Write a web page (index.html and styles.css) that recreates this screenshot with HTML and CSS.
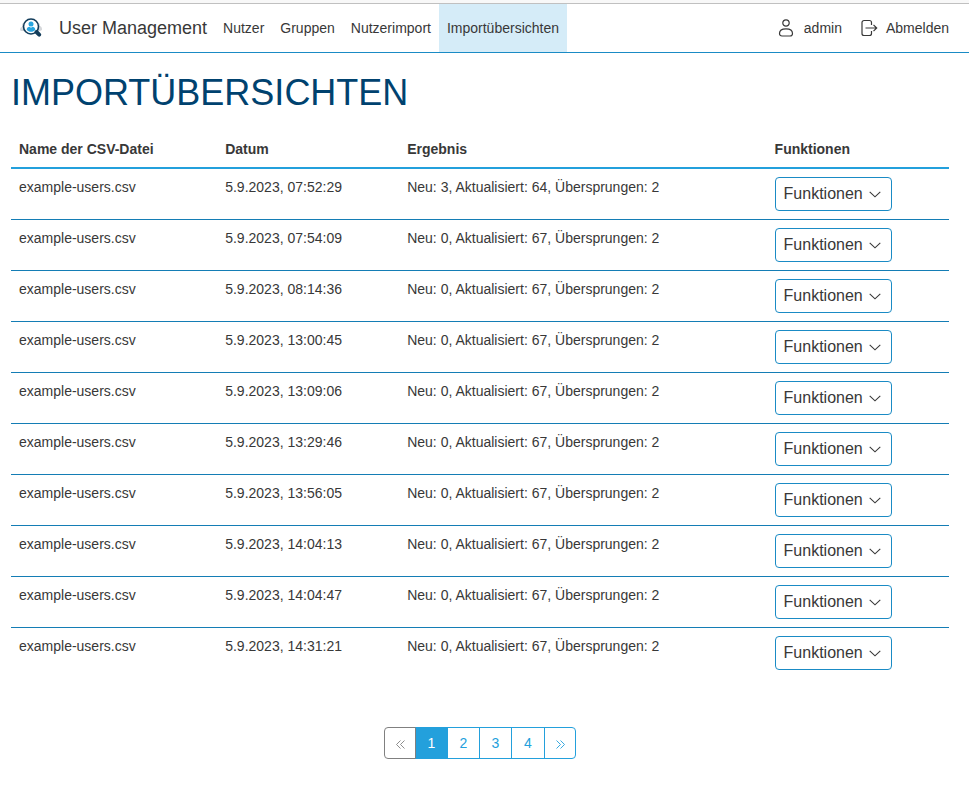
FILE: index.html
```
<!DOCTYPE html>
<html lang="de">
<head>
<meta charset="utf-8">
<title>User Management</title>
<link rel="stylesheet" href="styles.css">
</head>
<body>
<div class="topline"></div>
<nav class="navbar">
  <a class="brand">
    <svg class="logo" width="24" height="20" viewBox="0 0 24 20">
      <path d="M0 12c0-2 1-3 2-3V6l3-2h12l3 2v2c2 1 2 2 2 4l-2 1H1z" fill="#d5d7da"/>
      <circle cx="11" cy="8.500" r="7.500" fill="#fff" stroke="#123c5a" stroke-width="1.600"/>
      <circle cx="11" cy="6" r="2.500" fill="#29a5df"/>
      <path d="M6.700 11.800c0-2 1.500-2.800 2.800-3l1.500 1 1.500-1c1.300.2 2.800 1 2.800 3-1.300 1.500-2.500 2-4.300 2s-3-.5-4.300-2z" fill="#29a5df"/>
      <path d="M16.500 14l2.700 2.600" stroke="#123c5a" stroke-width="4" stroke-linecap="round"/>
    </svg>
    <span class="brand-name">User Management</span>
  </a>
  <a class="nav-link">Nutzer</a>
  <a class="nav-link">Gruppen</a>
  <a class="nav-link">Nutzerimport</a>
  <a class="nav-link active">Importübersichten</a>
  <div class="account">
    <a class="account-link">
      <svg width="16" height="18" viewBox="0 0 16 18" fill="none" stroke="#383838" stroke-width="1.200"><circle cx="8" cy="4" r="3.200"/><path d="M1.500 14.500C1.500 11.500 4.200 9.900 8 9.900s6.500 1.600 6.500 4.600c0 1.600-1 2.500-2.500 2.500H4c-1.500 0-2.500-.9-2.500-2.500z"/></svg>
      <span>admin</span>
    </a>
    <a class="account-link logout">
      <svg width="17" height="18" viewBox="0 0 17 18" fill="none" stroke="#383838" stroke-width="1.200"><path d="M10.500 6v-2.500a2 2 0 0 0-2-2h-5.500a2 2 0 0 0-2 2v11a2 2 0 0 0 2 2h5.500a2 2 0 0 0 2-2v-2.500M4.500 9h11M12.500 5.800L15.700 9l-3.200 3.200"/></svg>
      <span>Abmelden</span>
    </a>
  </div>
</nav>
<main class="content">
  <h1>IMPORTÜBERSICHTEN</h1>
  <table class="imports">
    <colgroup><col class="col-name"><col class="col-date"><col class="col-result"><col></colgroup>
    <thead><tr><th>Name der CSV-Datei</th><th>Datum</th><th>Ergebnis</th><th>Funktionen</th></tr></thead>
    <tbody id="rows"></tbody>
  </table>
  <div class="pagination">
    <a class="page disabled"><svg width="9" height="9" viewBox="0 0 9 9"><path d="M4.500.5l-4 4 4 4M8.500.5l-4 4 4 4"/></svg></a>
    <a class="page current">1</a>
    <a class="page">2</a>
    <a class="page">3</a>
    <a class="page wide">4</a>
    <a class="page last"><svg width="9" height="9" viewBox="0 0 9 9"><path d="M.5.500l4 4-4 4M4.500.5l4 4-4 4"/></svg></a>
  </div>
</main>
<script src="script.js"></script>
</body>
</html>
```
FILE: styles.css
```
* { box-sizing: border-box; }
body {
  margin: 0;
  background: #fff;
  color: #383838;
  font: 14px/20px "Liberation Sans", Arial, sans-serif;
}
.topline { height: 4px; background: #f8f8f8; border-bottom: 1px solid #c0c0c0; }
.navbar {
  display: flex;
  align-items: stretch;
  height: 49px;
  padding: 0 20px;
  border-bottom: 1px solid #1a8bc5;
}
.brand { display: flex; align-items: center; margin-right: 8px; }
.logo { margin-right: 15px; }
.brand-name { font-size: 18px; }
.nav-link { display: flex; align-items: center; padding: 0 8px; }
.active { background: #d5ecf8; }
.account { display: flex; margin-left: auto; }
.account-link { display: flex; align-items: center; gap: 10px; }
.logout { margin-left: 19px; gap: 8px; }
.content { padding: 20px 20px 0 11px; }
h1 { margin: 0; font-size: 36px; line-height: 40px; font-weight: 400; color: #00426f; }
.imports { width: 938px; margin-top: 17px; border-spacing: 0; table-layout: fixed; }
.col-name { width: 206.2px; }
.col-date { width: 182px; }
.col-result { width: 367.4px; }
th { height: 39px; padding: 0 8px; text-align: left; border-bottom: 2px solid #23a0dc; }
td { height: 51px; padding: 8px; vertical-align: top; border-bottom: 1px solid #147db5; }
tbody tr:last-child td { border-bottom: 0; height: 50px; }
.menu-button {
  display: flex;
  align-items: center;
  width: 117px;
  height: 34px;
  padding: 0 8px;
  border: 1px solid #1a8bc5;
  border-radius: 4px;
  background: #fff;
  color: #383838;
  font: 16px/20px "Liberation Sans", Arial, sans-serif;
}
.menu-button svg { margin: 1px 0 0 6.200px; }
.pagination { display: flex; width: 192px; margin: 49px auto 0 373px; color: #23a0dc; }
.page {
  display: flex;
  align-items: center;
  justify-content: center;
  width: 33px;
  height: 32px;
  margin-left: -1px;
  border: 1px solid #23a0dc;
}
.page svg { margin-top: 2px; fill: none; stroke: currentColor; stroke-width: .9; }
.disabled { width: 32px; margin-left: 0; border-color: #808080; border-radius: 4px 0 0 4px; color: #808080; }
.current { width: 33px; border-left-color: #808080; background: #23a0dc; color: #fff; }
.wide { width: 34px; }
.last { width: 32px; border-radius: 0 4px 4px 0; }
```
FILE: script.js
```
const imports = [
  ["07:52:29", 3, 64], ["07:54:09", 0, 67], ["08:14:36", 0, 67], ["13:00:45", 0, 67], ["13:09:06", 0, 67],
  ["13:29:46", 0, 67], ["13:56:05", 0, 67], ["14:04:13", 0, 67], ["14:04:47", 0, 67], ["14:31:21", 0, 67]
];
document.getElementById("rows").innerHTML = imports.map(([time, added, updated]) => `<tr>
  <td>example-users.csv</td>
  <td>5.9.2023, ${time}</td>
  <td>Neu: ${added}, Aktualisiert: ${updated}, Übersprungen: 2</td>
  <td><button class="menu-button">Funktionen<svg width="12" height="7" viewBox="0 0 12 7" fill="none" stroke="#383838" stroke-width="1.100"><path d="M.7.800L6 5.800 11.300.8"/></svg></button></td>
</tr>`).join("");
```
